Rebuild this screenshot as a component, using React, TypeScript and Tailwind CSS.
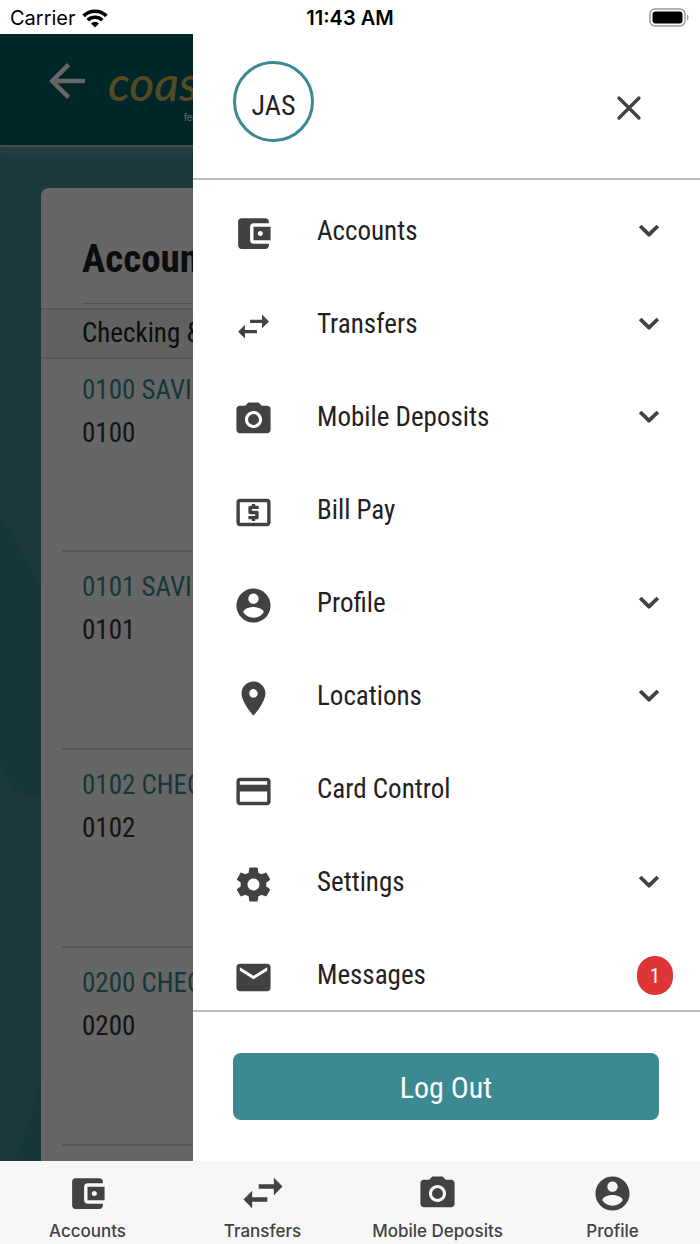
import type { ReactNode } from "react";

const ICONS = {
  wallet:
    "M21 18v1c0 1.1-.9 2-2 2H5c-1.11 0-2-.9-2-2V5c0-1.1.89-2 2-2h14c1.1 0 2 .9 2 2v1h-9c-1.11 0-2 .9-2 2v8c0 1.1.89 2 2 2h9zm-9-2h10V8H12v8zm4-2.5c-.83 0-1.5-.67-1.5-1.5s.67-1.5 1.5-1.5 1.5.67 1.5 1.5-.67 1.5-1.5 1.5z",
  swap: "M6.99 11L3 15l3.99 4v-3H14v-2H6.99v-3zM21 9l-3.99-4v3H10v2h7.01v3L21 9z",
  camera:
    "M12 8.8a3.2 3.2 0 1 0 0 6.4 3.2 3.2 0 0 0 0-6.4zM9 2L7.17 4H4c-1.1 0-2 .9-2 2v12c0 1.1.9 2 2 2h16c1.1 0 2-.9 2-2V6c0-1.1-.9-2-2-2h-3.17L15 2H9zm3 15c-2.76 0-5-2.24-5-5s2.24-5 5-5 5 2.24 5 5-2.24 5-5 5z",
  bill: "M11 17h2v-1h1c.55 0 1-.45 1-1v-3c0-.55-.45-1-1-1h-3v-1h4V8h-2V7h-2v1h-1c-.55 0-1 .45-1 1v3c0 .55.45 1 1 1h3v1H9v2h2v1zm9-13H4c-1.11 0-1.99.89-1.99 2L2 18c0 1.11.89 2 2 2h16c1.11 0 2-.89 2-2V6c0-1.11-.89-2-2-2zm0 14H4V6h16v12z",
  person:
    "M12 2C6.48 2 2 6.48 2 12s4.48 10 10 10 10-4.48 10-10S17.52 2 12 2zm0 3c1.66 0 3 1.34 3 3s-1.34 3-3 3-3-1.34-3-3 1.34-3 3-3zm0 14.2c-2.5 0-4.71-1.28-6-3.22.03-1.99 4-3.08 6-3.08 1.99 0 5.97 1.09 6 3.08-1.29 1.94-3.5 3.22-6 3.22z",
  pin: "M12 2C8.13 2 5 5.13 5 9c0 5.25 7 13 7 13s7-7.75 7-13c0-3.87-3.13-7-7-7zm0 9.5c-1.38 0-2.5-1.12-2.5-2.5s1.12-2.5 2.5-2.5 2.5 1.12 2.5 2.5-1.12 2.5-2.5 2.5z",
  card: "M20 4H4c-1.11 0-1.99.89-1.99 2L2 18c0 1.11.89 2 2 2h16c1.11 0 2-.89 2-2V6c0-1.11-.89-2-2-2zm0 14H4v-6h16v6zm0-10H4V6h16v2z",
  gear: "M19.43 12.98c.04-.32.07-.64.07-.98s-.03-.66-.07-.98l2.11-1.65c.19-.15.24-.42.12-.64l-2-3.46c-.12-.22-.39-.3-.61-.22l-2.49 1c-.52-.4-1.08-.73-1.69-.98l-.38-2.65C14.46 2.18 14.25 2 14 2h-4c-.25 0-.46.18-.49.42l-.38 2.65c-.61.25-1.17.59-1.69.98l-2.49-1c-.23-.09-.49 0-.61.22l-2 3.46c-.13.22-.07.49.12.64l2.11 1.65c-.04.32-.07.65-.07.98s.03.66.07.98l-2.11 1.65c-.19.15-.24.42-.12.64l2 3.46c.12.22.39.3.61.22l2.49-1c.52.4 1.08.73 1.69.98l.38 2.65c.03.24.24.42.49.42h4c.25 0 .46-.18.49-.42l.38-2.65c.61-.25 1.17-.59 1.69-.98l2.49 1c.23.09.49 0 .61-.22l2-3.46c.12-.22.07-.49-.12-.64l-2.11-1.65zM12 15.5c-1.93 0-3.5-1.57-3.5-3.5s1.57-3.5 3.5-3.5 3.5 1.57 3.5 3.5-1.57 3.5-3.5 3.5z",
  mail: "M20 4H4c-1.1 0-1.99.9-1.99 2L2 18c0 1.1.9 2 2 2h16c1.1 0 2-.9 2-2V6c0-1.1-.9-2-2-2zm0 4l-8 5-8-5V6l8 5 8-5v2z",
  back: "M20 11H7.83l5.59-5.59L12 4l-8 8 8 8 1.41-1.41L7.83 13H20v-2z",
};

type IconName = keyof typeof ICONS;

const MENU: { label: string; icon: IconName; expands?: boolean; count?: number }[] = [
  { label: "Accounts", icon: "wallet", expands: true },
  { label: "Transfers", icon: "swap", expands: true },
  { label: "Mobile Deposits", icon: "camera", expands: true },
  { label: "Bill Pay", icon: "bill" },
  { label: "Profile", icon: "person", expands: true },
  { label: "Locations", icon: "pin", expands: true },
  { label: "Card Control", icon: "card" },
  { label: "Settings", icon: "gear", expands: true },
  { label: "Messages", icon: "mail", count: 1 },
];

const TABS: { label: string; icon: IconName; size: string }[] = [
  { label: "Accounts", icon: "wallet", size: "size-[41px]" },
  { label: "Transfers", icon: "swap", size: "size-[52px]" },
  { label: "Mobile Deposits", icon: "camera", size: "size-[41px]" },
  { label: "Profile", icon: "person", size: "size-[41px]" },
];

const ACCOUNTS = [
  { id: "0100", name: "0100 SAVINGS" },
  { id: "0101", name: "0101 SAVINGS" },
  { id: "0102", name: "0102 CHECKING" },
  { id: "0200", name: "0200 CHECKING" },
];

function Icon({ name, className }: { name: IconName; className?: string }) {
  return (
    <svg viewBox="0 0 24 24" fill="currentColor" aria-hidden="true" className={className}>
      <path d={ICONS[name]} />
    </svg>
  );
}

function StatusBar() {
  return (
    <div className="grid h-[34px] shrink-0 grid-cols-3 items-center bg-white px-2.5 pt-0.5 font-['Inter',sans-serif] text-xl text-black">
      <div className="flex items-center gap-1.5">
        <span>Carrier</span>
        <svg viewBox="0 0 26 19" className="h-[19px] w-[26px]" aria-hidden="true">
          <g fill="none" stroke="currentColor" strokeWidth="3.6">
            <path d="M1.6 6.9a16.4 16.4 0 0 1 22.8 0" />
            <path d="M5.7 11.2a10.5 10.5 0 0 1 14.6 0" />
          </g>
          <path d="M13 18.5l-4-4a5.7 5.7 0 0 1 8 0z" fill="currentColor" />
        </svg>
      </div>
      <span className="text-center font-semibold">11:43 AM</span>
      <svg viewBox="0 0 41 20" className="h-5 w-[41px] justify-self-end" aria-hidden="true">
        <rect x="1" y="1" width="35" height="17" rx="5" fill="none" stroke="#9b9b9b" strokeWidth="1.5" />
        <rect x="3.5" y="3.5" width="30" height="12" rx="3" />
        <path d="M38 6.500c2 .6 2 5.400 0 6z" fill="#9b9b9b" />
      </svg>
    </div>
  );
}

function AccountsPage() {
  return (
    <div className="absolute inset-0 flex flex-col overflow-hidden bg-[#46919a]">
      <svg viewBox="0 0 41 1127" className="absolute left-0 top-0 h-full w-[41px]" preserveAspectRatio="none" aria-hidden="true">
        <path d="M0 481L41 551V764L22 759Q11 755 6 742L0 728zM41 1046V1127H15Q30 1090 41 1046z" fill="#3a8a91" />
      </svg>
      <header className="relative flex h-[113px] shrink-0 items-start border-b-2 border-[#b8b8b8] bg-[#005f64] pt-5 pl-10 shadow-[0_4px_10px_rgba(255,255,255,0.2)]">
        <button type="button" aria-label="Back" className="text-white">
          <Icon name="back" className="size-[54px]" />
        </button>
        <div className="ml-3.5 flex flex-col pt-1">
          <p className="font-['Lato',sans-serif] text-5xl leading-[50px] font-medium text-[#d5b860] italic">coastal</p>
          <p className="pt-1 pl-[76px] font-['Liberation_Sans',sans-serif] text-[10px] leading-3 whitespace-nowrap text-white">
            federal
          </p>
        </div>
      </header>
      <main className="relative mx-[41px] mt-[41px] flex-1 rounded-t-lg bg-white">
        <h1 className="ml-[41px] border-b border-[#cfcfcf] pt-[46px] pb-[19px] text-[39px] leading-[50px] font-bold text-[#222]">
          Accounts
        </h1>
        <h2 className="mt-1 border-y-2 border-[#dcdcdc] bg-[#f2f2f2] pl-[41px] text-[27px] leading-[47px] text-[#222]">
          Checking &amp; Savings
        </h2>
        <ul className="pl-[21px]">
          {ACCOUNTS.map((a) => (
            <li key={a.id} className="h-[198px] border-b-2 border-[#dcdcdc] pt-3.5 pl-5 first:h-[193px] first:pt-2.5">
              <a href="#" className="block text-[27px] leading-[43px] whitespace-nowrap text-[#3a8a91]">
                {a.name}
              </a>
              <p className="text-[27px] leading-[43px] text-[#333]">{a.id}</p>
            </li>
          ))}
        </ul>
      </main>
    </div>
  );
}

function MenuRow({ label, icon, children }: { label: string; icon: IconName; children?: ReactNode }) {
  return (
    <li>
      <button type="button" className="flex h-[93px] w-full items-center pr-[27px] pl-10 text-left">
        <Icon name={icon} className="mt-1 size-[41px] text-[#424242]" />
        <span className="ml-[43px] flex-1 text-[27px]">{label}</span>
        {children}
      </button>
    </li>
  );
}

function Drawer() {
  return (
    <aside className="absolute inset-y-0 right-0 left-[193px] flex flex-col bg-white text-[#222]">
      <div className="flex h-[146px] shrink-0 items-start justify-between border-b-2 border-[#bdbdbd] pt-[27px] pr-[51px] pl-10">
        <div className="flex size-[81px] items-center justify-center rounded-full border-3 border-[#3a8a91] pt-2 text-[28px]">
          JAS
        </div>
        <button type="button" aria-label="Close menu" className="mt-[27px] text-[#424242]">
          <svg viewBox="0 0 24 24" className="size-10" fill="none" stroke="currentColor" strokeWidth="2" strokeLinecap="round" aria-hidden="true">
            <path d="M6 6l12 12M18 6L6 18" />
          </svg>
        </button>
      </div>
      <nav className="min-h-0 flex-1 overflow-hidden pt-[5px]">
        <ul>
          {MENU.map((m) => (
            <MenuRow key={m.label} label={m.label} icon={m.icon}>
              {m.expands && (
                <svg viewBox="0 0 24 24" className="h-10 w-12 text-[#424242]" fill="none" stroke="currentColor" strokeWidth="2.3" strokeLinejoin="round" aria-hidden="true">
                  <path d="M6.700 8.400L12 13.600l5.300-5.200" />
                </svg>
              )}
              {m.count && (
                <span className="flex h-[39px] w-9 items-center justify-center rounded-full bg-[#de3637] text-xl text-white">
                  {m.count}
                </span>
              )}
            </MenuRow>
          ))}
        </ul>
      </nav>
      <div className="shrink-0 border-t-2 border-[#bdbdbd] pt-[41px] pr-[41px] pb-[41px] pl-10">
        <button type="button" className="h-[67px] w-full rounded-lg bg-[#3b8a92] pt-0.5 text-[30px] text-white">
          Log Out
        </button>
      </div>
    </aside>
  );
}

function TabBar() {
  return (
    <nav className="grid h-[83px] shrink-0 grid-cols-4 bg-[#f7f7f7] text-[#424242]">
      {TABS.map((t) => (
        <a key={t.label} href="#" className="flex flex-col items-center">
          <span className="flex h-[58px] items-center justify-center pt-1.5">
            <Icon name={t.icon} className={t.size} />
          </span>
          <span className="font-['Inter',sans-serif] text-[17px] leading-6 font-medium">{t.label}</span>
        </a>
      ))}
    </nav>
  );
}

export default function App() {
  return (
    <div className="flex h-screen flex-col overflow-hidden font-['Roboto_Condensed','Liberation_Sans_Narrow','Roboto',sans-serif]">
      <StatusBar />
      <div className="relative min-h-0 flex-1 overflow-hidden">
        <AccountsPage />
        <div className="absolute inset-0 bg-black/60" />
        <Drawer />
      </div>
      <TabBar />
    </div>
  );
}
